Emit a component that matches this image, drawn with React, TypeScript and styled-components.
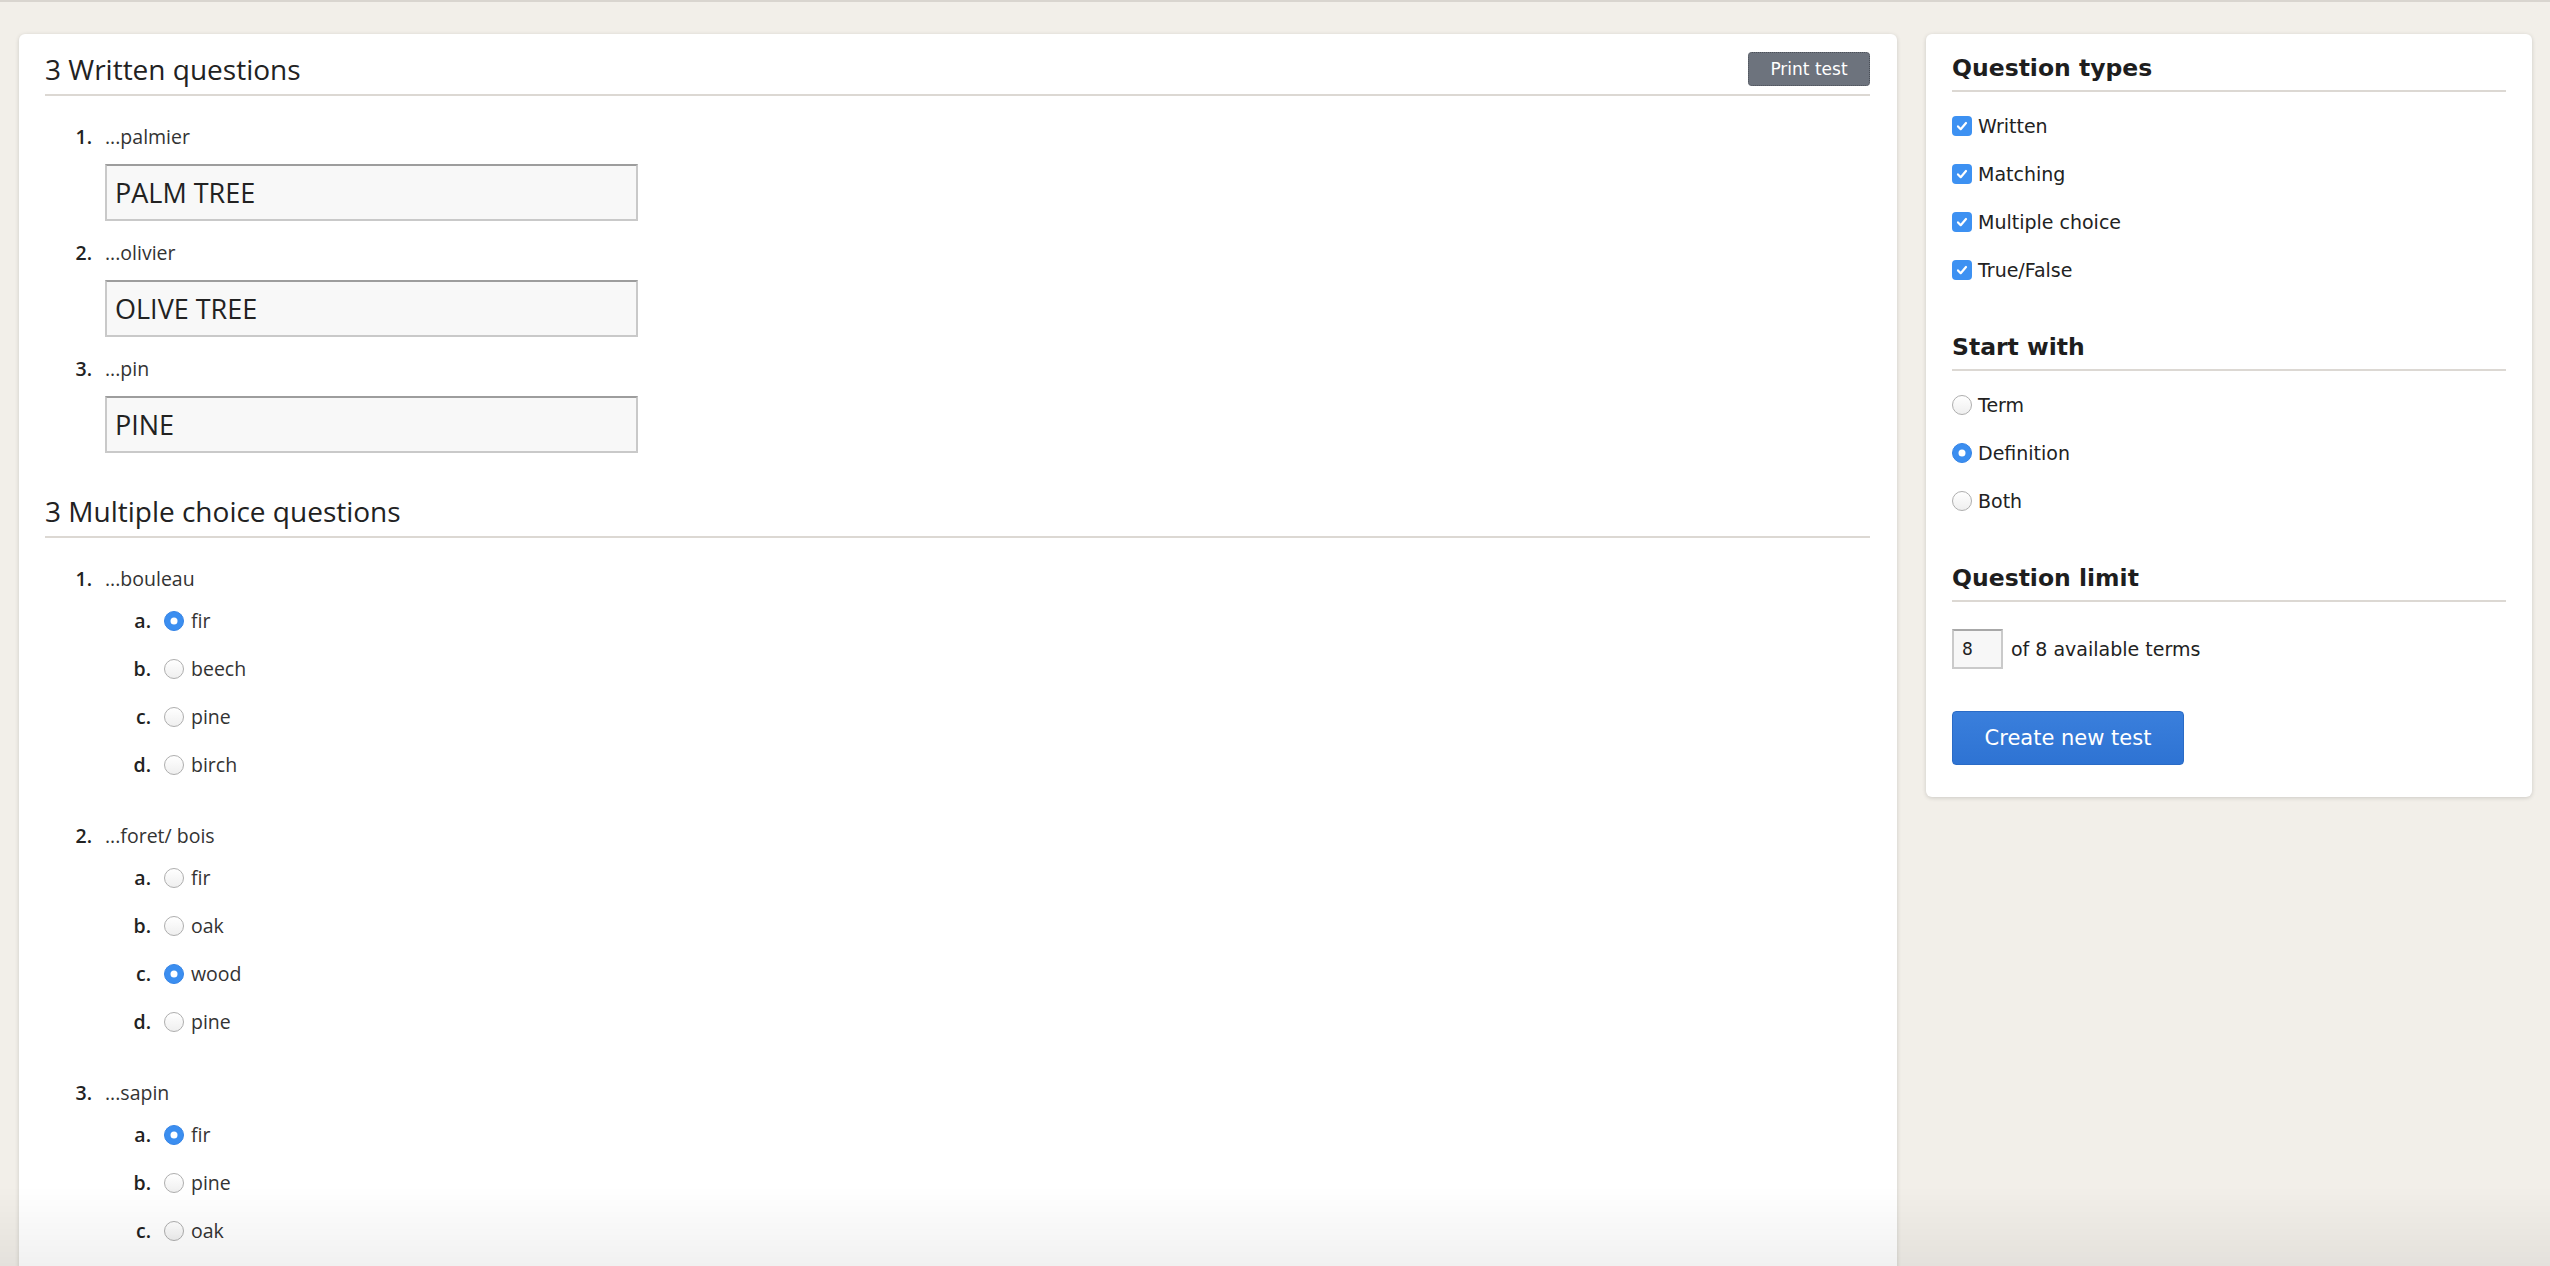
import * as React from 'react';
import styled, { createGlobalStyle } from 'styled-components';

const GlobalStyle = createGlobalStyle`
  html, body {
    margin: 0;
    padding: 0;
  }
  body {
    background: #f2efe9;
    font-family: "Open Sans", "Liberation Sans", sans-serif;
    color: #222;
  }
`

const Page = styled.div`
  min-height: 100vh;
  box-sizing: border-box;
  border-top: 2px solid #d9d5cf;
  padding: 32px 18px 0 19px;
  display: flex;
  align-items: flex-start;
  gap: 29px;
`

const Card = styled.div`
  box-sizing: border-box;
  background: #fff;
  border-radius: 6px;
  box-shadow: 0 1px 4px rgba(0, 0, 0, 0.16);
`

const TestCard = styled(Card)`
  flex: 0 0 1878px;
  padding: 17px 27px 40px 26px;
`

const Sidebar = styled(Card)`
  flex: 0 0 606px;
  padding: 20px 26px 32px;
  font-family: "DejaVu Sans", "Liberation Sans", sans-serif;
`

const Section = styled.section`
  & + & {
    margin-top: 40px;
  }
`

const SectionHeader = styled.div`
  display: flex;
  align-items: center;
  justify-content: space-between;
  padding-bottom: 7px;
  border-bottom: 2px solid #dcd8d3;
`

const SectionTitle = styled.h2`
  margin: 0;
  font-size: 28px;
  line-height: 36px;
  font-weight: 400;
  color: #222;
`

const PrintButton = styled.button`
  width: 122px;
  height: 34px;
  background: #6d737d;
  border: 1px dotted #4b5058;
  border-radius: 4px;
  color: #fff;
  font-family: "DejaVu Sans", sans-serif;
  font-size: 17px;
  padding: 0;
`

const QuestionList = styled.ol<{ $gap: number }>`
  list-style: none;
  margin: 28px 0 0;
  padding: 0;
  display: flex;
  flex-direction: column;
  gap: ${p => p.$gap}px;
`

const Question = styled.li`
  display: grid;
  grid-template-columns: 60px 1fr;
  font-size: 19.5px;
  line-height: 26px;
`

const Num = styled.span`
  font-weight: 600;
  text-align: right;
  padding-right: 13px;
  color: #222;
`

const Prompt = styled.div`
  color: #333;
`

const AnswerInput = styled.input`
  display: block;
  box-sizing: border-box;
  width: 533px;
  height: 57px;
  margin-top: 14px;
  padding: 0 8px;
  background: #f8f8f8;
  border: 2px solid #c9c9c9;
  border-top-color: #9d9d9d;
  font-family: "Open Sans", sans-serif;
  font-size: 27px;
  color: #222;
  outline: none;
`

const Options = styled.div`
  display: flex;
  flex-direction: column;
  margin-top: 5px;
`

const OptionRow = styled.label`
  display: flex;
  align-items: center;
  height: 48px;
`

const OptionMark = styled.span`
  width: 46px;
  margin-right: 13px;
  text-align: right;
  font-weight: 600;
  color: #222;
`

const Radio = styled.span<{ $checked?: boolean }>`
  position: relative;
  flex: 0 0 20px;
  height: 20px;
  box-sizing: border-box;
  border-radius: 50%;
  margin-right: 7px;
  background: ${p => (p.$checked ? '#3b8ef0' : 'linear-gradient(#ffffff, #efefef)')};
  border: 1px solid ${p => (p.$checked ? '#3584e6' : '#aeaeae')};

  &::after {
    content: '';
    display: ${p => (p.$checked ? 'block' : 'none')};
    position: absolute;
    top: 50%;
    left: 50%;
    width: 7px;
    height: 7px;
    border-radius: 50%;
    background: #fff;
    transform: translate(-50%, -50%);
  }
`

const OptionText = styled.span`
  color: #333;
`

const SideSection = styled.section`
  & + & {
    margin-top: 39px;
  }
`

const SideTitle = styled.h3`
  margin: 0;
  padding-bottom: 8px;
  border-bottom: 2px solid #dcd8d3;
  font-size: 23.5px;
  line-height: 28px;
  font-weight: 700;
  color: #1e1e1e;
`

const ChoiceList = styled.div`
  display: flex;
  flex-direction: column;
  margin-top: 10px;
`

const ChoiceRow = styled.label`
  display: flex;
  align-items: center;
  gap: 6px;
  height: 48px;
  font-size: 19px;
  line-height: 24px;
  color: #222;

  ${Radio} {
    margin-right: 0;
  }
`

const CheckBox = styled.span`
  display: flex;
  align-items: center;
  justify-content: center;
  flex: 0 0 20px;
  height: 20px;
  border-radius: 4px;
  background: #3d91f2;
`

const LimitRow = styled.div`
  display: flex;
  align-items: center;
  gap: 8px;
  margin-top: 27px;
  font-size: 19px;
  color: #222;
`

const LimitInput = styled.input`
  box-sizing: border-box;
  width: 51px;
  height: 40px;
  padding: 0 8px;
  background: #f7f7f7;
  border: 2px solid #cacaca;
  border-top-color: #a8a8a8;
  font-family: "DejaVu Sans", sans-serif;
  font-size: 17px;
  color: #222;
  outline: none;
`

const CreateButton = styled.button`
  display: block;
  width: 232px;
  height: 54px;
  margin-top: 42px;
  padding: 0;
  background: linear-gradient(#3a7fdc, #2e73d3);
  border: 1px solid #2a6bc6;
  border-radius: 4px;
  color: #fff;
  font-family: "DejaVu Sans", sans-serif;
  font-size: 21px;
`

// soft fade that sits over the bottom edge of the window
const BottomFade = styled.div`
  position: fixed;
  left: 0;
  right: 0;
  bottom: 0;
  height: 80px;
  background: linear-gradient(rgba(0, 0, 0, 0), rgba(0, 0, 0, 0.055));
  pointer-events: none;
`

const written = [
  { prompt: '...palmier', answer: 'PALM TREE' },
  { prompt: '...olivier', answer: 'OLIVE TREE' },
  { prompt: '...pin', answer: 'PINE' },
]

const multiple = [
  { prompt: '...bouleau', options: ['fir', 'beech', 'pine', 'birch'], picked: 0 },
  { prompt: '...foret/ bois', options: ['fir', 'oak', 'wood', 'pine'], picked: 2 },
  { prompt: '...sapin', options: ['fir', 'pine', 'oak', 'beech'], picked: 0 },
]

const types = ['Written', 'Matching', 'Multiple choice', 'True/False']
const starts = ['Term', 'Definition', 'Both']

const Check = () => (
  <svg width="14" height="14" viewBox="0 0 14 14">
    <path d="M3 7.4l2.7 2.8L11 4" fill="none" stroke="#fff" strokeWidth="2.2" strokeLinecap="round" strokeLinejoin="round" />
  </svg>
)

export default function App() {
  const [startWith, setStartWith] = React.useState(1)

  return (
    <>
      <GlobalStyle />
      <Page>
        <TestCard>
          <Section>
            <SectionHeader>
              <SectionTitle>3 Written questions</SectionTitle>
              <PrintButton>Print test</PrintButton>
            </SectionHeader>
            <QuestionList $gap={19}>
              {written.map((q, i) => (
                <Question key={q.prompt}>
                  <Num>{i + 1}.</Num>
                  <div>
                    <Prompt>{q.prompt}</Prompt>
                    <AnswerInput defaultValue={q.answer} />
                  </div>
                </Question>
              ))}
            </QuestionList>
          </Section>

          <Section>
            <SectionHeader>
              <SectionTitle>3 Multiple choice questions</SectionTitle>
            </SectionHeader>
            <QuestionList $gap={34}>
              {multiple.map((q, i) => (
                <Question key={q.prompt}>
                  <Num>{i + 1}.</Num>
                  <div>
                    <Prompt>{q.prompt}</Prompt>
                    <Options>
                      {q.options.map((opt, j) => (
                        <OptionRow key={j}>
                          <OptionMark>{String.fromCharCode(97 + j)}.</OptionMark>
                          <Radio $checked={j === q.picked} />
                          <OptionText>{opt}</OptionText>
                        </OptionRow>
                      ))}
                    </Options>
                  </div>
                </Question>
              ))}
            </QuestionList>
          </Section>
        </TestCard>

        <Sidebar>
          <SideSection>
            <SideTitle>Question types</SideTitle>
            <ChoiceList>
              {types.map(t => (
                <ChoiceRow key={t}>
                  <CheckBox><Check /></CheckBox>
                  {t}
                </ChoiceRow>
              ))}
            </ChoiceList>
          </SideSection>

          <SideSection>
            <SideTitle>Start with</SideTitle>
            <ChoiceList>
              {starts.map((s, i) => (
                <ChoiceRow key={s} onClick={() => setStartWith(i)}>
                  <Radio $checked={i === startWith} />
                  {s}
                </ChoiceRow>
              ))}
            </ChoiceList>
          </SideSection>

          <SideSection>
            <SideTitle>Question limit</SideTitle>
            <LimitRow>
              <LimitInput defaultValue="8" />
              of 8 available terms
            </LimitRow>
            <CreateButton>Create new test</CreateButton>
          </SideSection>
        </Sidebar>
      </Page>
      <BottomFade />
    </>
  )
}
